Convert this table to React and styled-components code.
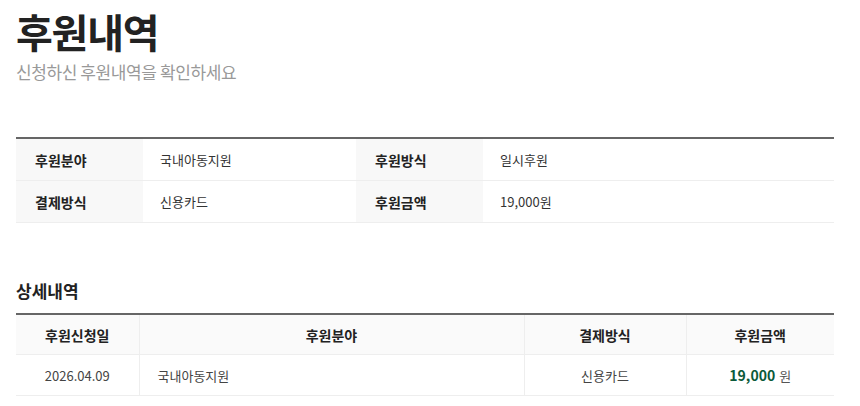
import React from 'react'
import styled, { createGlobalStyle } from 'styled-components'

const GlobalStyle = createGlobalStyle`
    body {
        margin: 0;
        background: #fff;
        font-family: 'Noto Sans CJK KR', 'Noto Sans', sans-serif;
        color: #222;
    }
`

const Page = styled.div`
    width: 818px;
    padding: 0 0 0 16px;
`

const Title = styled.h1`
    margin: 0;
    padding-top: 6px;
    font-size: 40px;
    font-weight: 700;
    line-height: 50px;
    color: #222;
    letter-spacing: -1.2px;
`

const Subtitle = styled.p`
    margin: 4px 0 0;
    font-size: 17px;
    line-height: 24px;
    color: #999;
    letter-spacing: -0.4px;
`

const InfoTable = styled.div`
    margin-top: 53px;
    border-top: 2px solid #666;
    display: grid;
    grid-template-columns: 127px 213px 127px 1fr;
`

const InfoLabel = styled.div`
    height: 41px;
    display: flex;
    align-items: center;
    padding-left: 19px;
    background: #f8f8f8;
    border-bottom: 1px solid #eee;
    font-size: 14px;
    font-weight: 700;
    color: #222;
`

const InfoValue = styled.div`
    height: 41px;
    display: flex;
    align-items: center;
    padding-left: 17px;
    border-bottom: 1px solid #eee;
    font-size: 13px;
    color: #333;
`

const SectionTitle = styled.h2`
    margin: 55px 0 0;
    font-size: 17px;
    font-weight: 700;
    line-height: 26px;
    color: #222;
`

const DetailTable = styled.table`
    margin-top: 9px;
    width: 100%;
    border-collapse: collapse;
    table-layout: fixed;
    border-top: 2px solid #666;
`

const Th = styled.th`
    height: 39px;
    padding: 0;
    background: #fafafa;
    border-bottom: 1px solid #eee;
    border-left: 1px solid #eee;
    font-size: 14px;
    font-weight: 700;
    color: #222;
    text-align: center;
    &:first-child { border-left: none; }
`

const Td = styled.td`
    height: 40px;
    padding: ${({ $left }) => ($left ? '0 0 0 18px' : '0')};
    border-bottom: 1px solid #eee;
    border-left: 1px solid #eee;
    font-size: 13px;
    color: #444;
    text-align: ${({ $left }) => ($left ? 'left' : 'center')};
    &:first-child { border-left: none; }
`

const Amount = styled.strong`
    color: #0b5a3a;
    font-size: 14px;
    font-weight: 700;
`

const Unit = styled.span`
    margin-left: 4px;
    color: #555;
    font-size: 13px;
`

const info = [
    ['후원분야', '국내아동지원', '후원방식', '일시후원'],
    ['결제방식', '신용카드', '후원금액', '19,000원'],
]

export default function App() {
    return (
        <Page>
            <GlobalStyle />
            <Title>후원내역</Title>
            <Subtitle>신청하신 후원내역을 확인하세요</Subtitle>

            <InfoTable>
                {info.map((row) => (
                    <React.Fragment key={row[0]}>
                        <InfoLabel>{row[0]}</InfoLabel>
                        <InfoValue>{row[1]}</InfoValue>
                        <InfoLabel>{row[2]}</InfoLabel>
                        <InfoValue>{row[3]}</InfoValue>
                    </React.Fragment>
                ))}
            </InfoTable>

            <SectionTitle>상세내역</SectionTitle>
            <DetailTable>
                <colgroup>
                    <col style={{ width: 123 }} />
                    <col style={{ width: 385 }} />
                    <col style={{ width: 162 }} />
                    <col />
                </colgroup>
                <thead>
                    <tr>
                        <Th>후원신청일</Th>
                        <Th>후원분야</Th>
                        <Th>결제방식</Th>
                        <Th>후원금액</Th>
                    </tr>
                </thead>
                <tbody>
                    <tr>
                        <Td>2026.04.09</Td>
                        <Td $left>국내아동지원</Td>
                        <Td>신용카드</Td>
                        <Td>
                            <Amount>19,000</Amount>
                            <Unit>원</Unit>
                        </Td>
                    </tr>
                </tbody>
            </DetailTable>
        </Page>
    )
}
